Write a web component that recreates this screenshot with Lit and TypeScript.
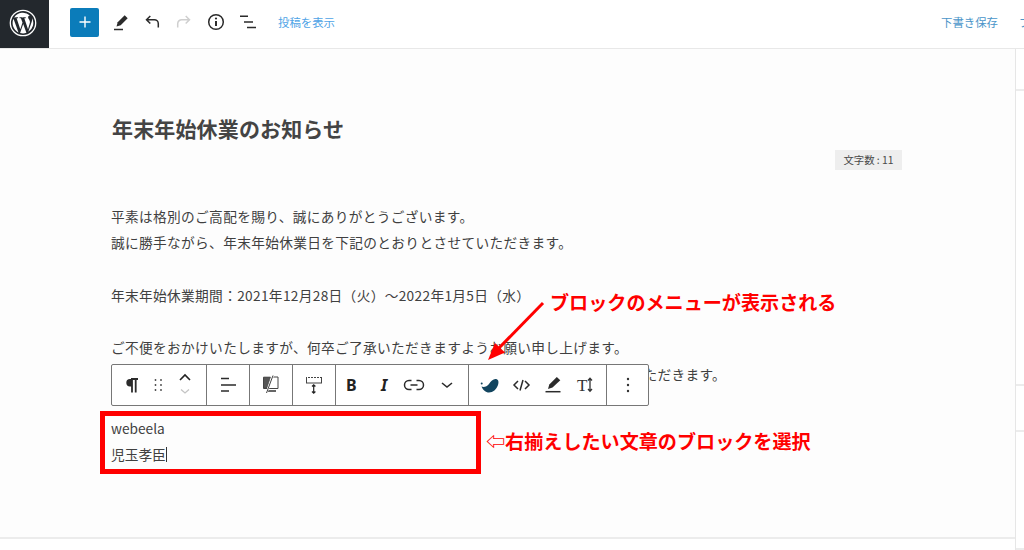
import { LitElement, html, css, svg } from "lit";
import { customElement } from "lit/decorators.js";

const ico = (w: number, body: unknown, vb = "0 0 24 24") =>
  html`<svg width=${w} height=${w} viewBox=${vb} fill="none">${body}</svg>`;

@customElement("app-root")
export class AppRoot extends LitElement {
  static styles = css`
    :host { display: block; width: 1024px; height: 550px; overflow: hidden; position: relative; background: #fff;
      font-family: "Noto Sans CJK JP", "Noto Sans", sans-serif; color: #3a3a3a; }
    .top { display: flex; height: 48px; border-bottom: 1px solid #e8e8e8; background: #fff; }
    .logo { width: 49px; height: 48px; box-sizing: border-box; padding: 0 3px 3px 0; background: #23282d; display: flex; align-items: center; justify-content: center; flex: none; }
    .row { flex: 1; min-width: 0; height: 44px; display: flex; align-items: center; }
    .add { width: 29px; height: 29px; margin-left: 21px; border-radius: 2px; background: #0b7cba; display: flex; align-items: center; justify-content: center; flex: none; }
    .tools { display: flex; align-items: center; gap: 8px; margin-left: 9px; }
    .tools span { width: 24px; height: 24px; display: flex; }
    .link { font-size: 11.4px; color: #4ea3e6; margin-left: 18px; white-space: nowrap; }
    .save { margin-left: auto; font-size: 11.4px; color: #4a95c9; white-space: nowrap; }
    .preview { margin-left: 21px; width: 5px; font-size: 11.4px; color: #4a95c9; white-space: nowrap; }
    .body { display: flex; height: 501px; }
    .editor { width: 1015px; height: 490px; background: #fdfdfd; border-bottom: 2px solid #ececec; box-sizing: border-box; padding: 64px 111px 0; }
    .side { flex: 1; border-left: 1px solid #e6e6e6; background: #fff; display: flex; flex-direction: column; }
    .side i { display: block; border-bottom: 2px solid #ececec; }
    h1 { margin: 0; font-size: 21px; line-height: 30px; font-weight: 700; color: #444; letter-spacing: .15px; padding-left: 1px; }
    .count-row { display: flex; justify-content: flex-end; margin-top: 7px; margin-right: 2px; }
    .count { background: #eeeeee; font-size: 10.4px; line-height: 20px; height: 20px; width: 67px; text-align: center; color: #4a4a4a; white-space: nowrap; }
    .para { margin-top: 33px; }
    p { margin: 0; font-size: 13.7px; line-height: 26.3px; height: 26.3px; white-space: nowrap; color: #404040; letter-spacing: .33px; }
    .sp { height: 26.3px; }
    .author { margin-top: 28px; }
    .author p { letter-spacing: 0; }
    .caret { display: inline-block; width: 1px; height: 15px; background: #333; vertical-align: -2px; }
    .bar { position: absolute; left: 111px; top: 364px; width: 538px; height: 42px; box-sizing: border-box; border: 1px solid #777; border-radius: 2px; background: #fff; display: flex; }
    .grp { display: flex; align-items: center; border-right: 1px solid #777; height: 100%; box-sizing: border-box; flex: none; }
    .grp:last-child { border-right: 0; flex: 1; justify-content: center; }
    .grp svg { display: block; }
    .g1 { width: 95px; } .g2 { width: 43px; } .g5 { width: 133px; } .g6 { width: 138px; }
    .box { position: absolute; left: 100px; top: 411px; width: 381px; height: 63px; box-sizing: border-box; border: 5px solid #f00; }
    .note { position: absolute; color: #f00; font-weight: 700; white-space: nowrap; font-size: 19.1px; line-height: 26px; }
    .n1 { left: 550px; top: 289px; }
    .n2 { left: 486px; top: 428px; }
    .arrow { position: absolute; left: 0; top: 0; pointer-events: none; }
  `;

  render() {
    const c = "#2b2b2b";
    return html`
      <div class="top">
        <div class="logo">
          <svg width="28" height="28" viewBox="0 0 28 28">
            <circle cx="14" cy="14" r="12.700" fill="none" stroke="#fff" stroke-width="1.300"/>
            <path d="M3.600 14c0 4.100 2.400 7.700 5.900 9.400L4.500 9.800A10.300 10.300 0 0 0 3.600 14zM21 13.500c0-1.300-.5-2.200-.9-2.900-.5-.9-1-1.600-1-2.400 0-.9.7-1.800 1.700-1.800h.1a10.400 10.400 0 0 0-15.700 2h.7c1.100 0 2.800-.1 2.800-.1.600 0 .6.800.1.900 0 0-.6.100-1.200.1l3.700 11 2.200-6.700-1.600-4.300c-.5 0-1.100-.1-1.100-.1-.6 0-.5-.9 0-.9 0 0 1.700.1 2.800.1s2.800-.1 2.800-.1c.6 0 .6.800.1.900 0 0-.6.100-1.200.1l3.700 10.900 1-3.400c.5-1.300.8-2.300.8-3.100zM14.200 15l-3.100 9a10.400 10.400 0 0 0 6.400-.2l-.1-.1L14.200 15zM23.100 9.100c0 .3.100.7.100 1 0 1-.2 2.200-.8 3.600l-3.100 9.100a10.400 10.400 0 0 0 3.800-13.700z" fill="#fff"/>
          </svg>
        </div>
        <div class="row">
          <div class="add">
            <svg width="14" height="14" viewBox="0 0 14 14"><path d="M7 1.500v11M1.500 7h11" stroke="#fff" stroke-width="1.400"/></svg>
          </div>
          <div class="tools">
            <span>${ico(24, svg`<path d="M7 17.500l1.200-4.300 7-7 3 3-7 7z" fill="${c}" transform="translate(1.500 -1)"/><path d="M6 20h9" stroke="${c}" stroke-width="1.500" transform="translate(0 -.5)"/>`)}</span>
            <span>${ico(24, svg`<path d="M18.300 17.500v-3.800a4 4 0 0 0-4-4H6.500M10.300 6L6.500 9.700l3.800 3.800" stroke="${c}" stroke-width="1.500"/>`)}</span>
            <span>${ico(24, svg`<path d="M5.700 17.500v-3.800a4 4 0 0 1 4-4h7.800M13.700 6l3.800 3.700-3.800 3.800" stroke="#cfcfcf" stroke-width="1.500"/>`)}</span>
            <span>${ico(24, svg`<circle cx="12" cy="12" r="7.300" stroke="${c}" stroke-width="1.500"/><path d="M12 11v5" stroke="${c}" stroke-width="2"/><circle cx="12" cy="8.500" r="1.100" fill="${c}"/>`)}</span>
            <span>${ico(24, svg`<path d="M4 6.500h8M8 12.200h9M11 17.800h9" stroke="${c}" stroke-width="1.500" transform="translate(0 -.2)"/>`)}</span>
          </div>
          <div class="link">投稿を表示</div>
          <div class="save">下書き保存</div>
          <div class="preview">プレビュー</div>
        </div>
      </div>
      <div class="body">
        <div class="editor">
          <h1>年末年始休業のお知らせ</h1>
          <div class="count-row"><div class="count">文字数 : 11</div></div>
          <div class="para">
            <p>平素は格別のご高配を賜り、誠にありがとうございます。</p>
            <p>誠に勝手ながら、年末年始休業日を下記のとおりとさせていただきます。</p>
            <div class="sp"></div>
            <p>年末年始休業期間：2021年12月28日（火）〜2022年1月5日（水）</p>
            <div class="sp"></div>
            <p>ご不便をおかけいたしますが、何卒ご了承いただきますようお願い申し上げます。</p>
            <p>なお、休業期間中にいただいたお問い合わせは、営業開始後より順次ご対応させていただきます。</p>
            <div class="author">
              <p>webeela</p>
              <p>児玉孝臣<span class="caret"></span></p>
            </div>
          </div>
        </div>
        <div class="side">
          <i style="height:40px"></i><i style="height:293px"></i><i style="height:44px"></i><i style="flex:1"></i>
        </div>
      </div>

      <div class="bar">
        <div class="grp g1">
          <svg width="94" height="40" viewBox="0 0 94 40">
            <path d="M20 14h-2a3.700 3.700 0 0 0 0 7.400h2z" fill="${c}"/>
            <path d="M20 14v13.500M23.700 14v13.500M19 14h7" stroke="${c}" stroke-width="1.800" fill="none"/>
            <g fill="#444"><circle cx="43.500" cy="15" r=".9"/><circle cx="49" cy="15" r=".9"/><circle cx="43.500" cy="20" r=".9"/><circle cx="49" cy="20" r=".9"/><circle cx="43.500" cy="25" r=".9"/><circle cx="49" cy="25" r=".9"/></g>
            <path d="M68 15l5-5 5 5" stroke="#222" stroke-width="1.600" fill="none"/><path d="M69 24.500l4 3.500 4-3.500" stroke="#c4c4c4" stroke-width="1.300" fill="none"/>
          </svg>
        </div>
        <div class="grp g2">
          <svg width="42" height="40" viewBox="0 0 42 40"><path d="M14 13.500h8M14 20h15M14 26h8" stroke="${c}" stroke-width="1.500"/></svg>
        </div>
        <div class="grp g2">
          <svg width="42" height="40" viewBox="0 0 42 40"><path d="M13.500 12h7l-3.500 11h-3.500z" fill="#555" stroke="#444" stroke-width=".6"/><path d="M22.500 12h5.500v11.500h-14.500v-11" stroke="#444" fill="none"/><path d="M18 26h8" stroke="#333" stroke-width="1.500"/><path d="M16.500 28l6.500-17.500" stroke="#fff" stroke-width="2"/><path d="M16.500 28l6.500-17.500" stroke="#444" stroke-width="1"/></svg>
        </div>
        <div class="grp g2">
          <svg width="42" height="40" viewBox="0 0 42 40"><rect x="13.500" y="12.500" width="15" height="5.500" stroke="#444" fill="none"/><path d="M14 12.500h14" stroke="#fff" stroke-dasharray="1 2"/><path d="M20.700 20v8M19 21.500l1.700-1.700 1.700 1.700M19 26.500l1.700 1.700 1.700-1.700" stroke="#222" stroke-width="1.200" fill="none"/></svg>
        </div>
        <div class="grp g5">
          <svg width="132" height="40" viewBox="0 0 132 40">
            <text x="10" y="26" font-family="Noto Sans" font-weight="700" font-size="16" fill="#222">B</text>
            <text x="45" y="26" font-family="Noto Sans" font-style="italic" font-weight="700" font-size="16" fill="#222">I</text>
            <path d="M75.500 15.500h-2.500a4.500 4.500 0 0 0 0 9h2.500M80.500 15.500h2.500a4.500 4.500 0 0 1 0 9h-2.500M74.500 20h7" stroke="#2b2b2b" stroke-width="1.500" fill="none"/>
            <path d="M106 18l5 4 5-4" stroke="#2b2b2b" stroke-width="1.600" fill="none"/>
          </svg>
        </div>
        <div class="grp g6">
          <svg width="137" height="40" viewBox="0 0 137 40">
            <circle cx="12.700" cy="18.500" r="1" fill="#12455f"/>
            <path d="M12.500 21.500C15 22.500 18 21.500 20 19C22 16 24.500 13.500 27 14C29.500 14.500 30 17 29 20C27.500 24.500 24 27.500 20 27.500C16.500 27.500 14 25 12.500 21.500z" fill="#12455f"/>
            <path d="M49 16l-4 4 4 4M56 16l4 4-4 4M54 15l-3 10.500" stroke="#2b2b2b" stroke-width="1.500" fill="none"/>
            <path d="M79 24l1.300-4.500 7.500-7.500 3.500 3.300-7.800 7.200z" fill="#2b2b2b"/><path d="M76.500 26.700h15" stroke="#2b2b2b" stroke-width="1.500"/>
            <text x="108" y="26" font-family="Liberation Serif" font-size="17" fill="#333">T</text>
            <path d="M121 13.500v12.500M119 15.500l2-2.200 2 2.200M119 24l2 2.200 2-2.200" stroke="#333" stroke-width="1.300" fill="none"/>
          </svg>
        </div>
        <div class="grp">
          <svg width="4" height="16" viewBox="0 0 4 16"><g fill="#333"><circle cx="2" cy="2" r="1.200"/><circle cx="2" cy="8" r="1.200"/><circle cx="2" cy="14" r="1.200"/></g></svg>
        </div>
      </div>

      <div class="box"></div>
      <svg class="arrow" width="1024" height="550"><path d="M543 303L498 349" stroke="#f00" stroke-width="3" fill="none"/><path d="M488 360l7-17 10 9.500z" fill="#f00"/></svg>
      <div class="note n1">ブロックのメニューが表示される</div>
      <div class="note n2">⇦右揃えしたい文章のブロックを選択</div>
    `;
  }
}
